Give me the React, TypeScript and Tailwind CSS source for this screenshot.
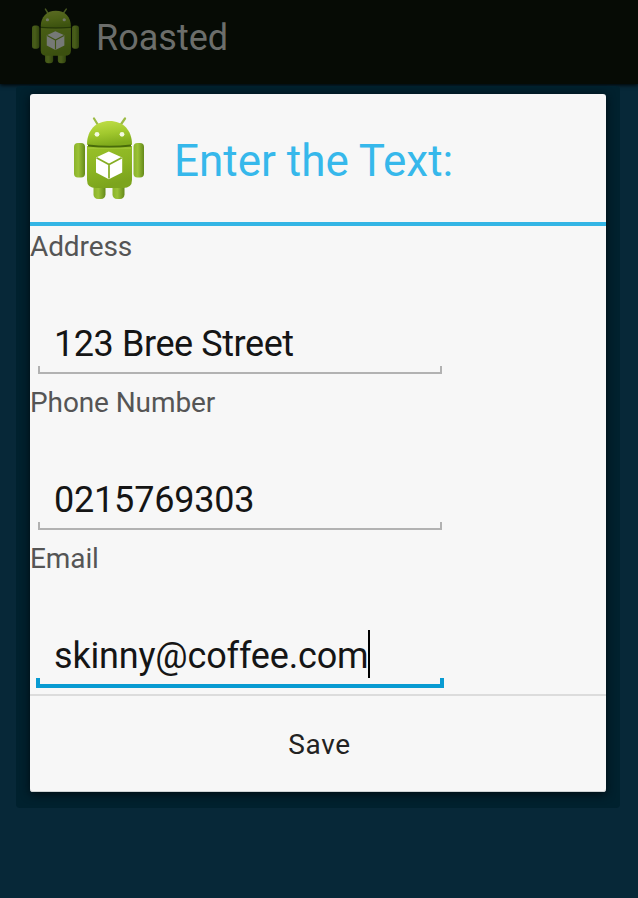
import React from "react";

function Robot({ className, id }: { className: string; id: string }) {
  return (
    <svg className={className} viewBox="0 0 70 83" aria-hidden="true">
      <defs>
        <linearGradient id={`${id}-head`} x1="0" y1="0" x2="0.25" y2="1">
          <stop offset="0" stopColor="#c3e04a" />
          <stop offset="0.55" stopColor="#a2c92e" />
          <stop offset="1" stopColor="#80ab1c" />
        </linearGradient>
        <linearGradient id={`${id}-body`} x1="0" y1="0" x2="0.3" y2="1">
          <stop offset="0" stopColor="#99c129" />
          <stop offset="0.6" stopColor="#8ab322" />
          <stop offset="1" stopColor="#7ca41d" />
        </linearGradient>
        <linearGradient id={`${id}-limb`} x1="0" y1="0" x2="1" y2="0">
          <stop offset="0" stopColor="#8bb32b" />
          <stop offset="0.4" stopColor="#9bc236" />
          <stop offset="1" stopColor="#64891a" />
        </linearGradient>
      </defs>
      <path d="M20 1.5 24 8M51 1.5 46.5 8" stroke="#9cbb45" strokeWidth="2.2" strokeLinecap="round" />
      <rect x="19.500" y="60" width="12" height="22" rx="4.500" fill={`url(#${id}-limb)`} />
      <rect x="38.500" y="60" width="12" height="22" rx="4.500" fill={`url(#${id}-limb)`} />
      <rect x="0" y="26" width="11" height="34.500" rx="4" fill={`url(#${id}-limb)`} />
      <rect x="59.500" y="26" width="10.500" height="34.500" rx="4" fill={`url(#${id}-limb)`} />
      <path d="M13 27.500C13 13 22 4 35.500 4S58 13 58 27.500Q57 29 54 29H17Q14 29 13 27.500Z" fill={`url(#${id}-head)`} />
      <path d="M13 29H58V63Q58 71 49 71H22Q13 71 13 63Z" fill={`url(#${id}-body)`} />
      <path d="M14 28.600Q35 31 57 28.600" stroke="#486b0a" strokeWidth="2" fill="none" />
      <path d="M14 31.200H57" stroke="#b0d248" strokeWidth="0.900" opacity="0.700" />
      <circle cx="23" cy="17.300" r="2.400" fill="#f4fae2" />
      <circle cx="48" cy="17.300" r="2.400" fill="#f4fae2" />
      <path d="M34.800 34.500 48.200 40.400V55.500L34.800 62.200 22 55.500V40.400Z" fill="#fff" />
      <path d="M22.500 40.800 35 47.500 47.700 40.800M35 47.500V61.500" stroke="#85ad23" strokeWidth="1.700" fill="none" />
    </svg>
  );
}

type FieldProps = { label: string; value: string; tracking: string; focused?: boolean };

function Field({ label, value, tracking, focused = false }: FieldProps) {
  return (
    <div className="flex h-[156px] flex-col">
      <label className="h-10 pt-px text-[28px] leading-[40px] tracking-[-0.1px] whitespace-nowrap text-[#555]">{label}</label>
      <div className={focused ? "ml-[6px] flex h-[110px] w-[408px] flex-col justify-end" : "ml-2 flex h-[108px] w-[404px] flex-col justify-end"}>
        <div className={focused ? "mb-px flex h-[42px] items-center pl-[18px]" : "mb-px flex h-[42px] items-center pl-4"}>
          <span className={`text-[36px] leading-[42px] whitespace-nowrap text-[#151515] ${tracking}`}>{value}</span>
          {focused && <span className="-mt-2 -mb-1 h-[48px] w-[2px] shrink-0 bg-black" />}
        </div>
        <div className={focused ? "h-[10px] shrink-0 border-x-4 border-b-4 border-[#099bd2]" : "h-2 shrink-0 border-x-2 border-b-2 border-[#b2b2b2]"} />
      </div>
    </div>
  );
}

export default function App() {
  return (
    <div className="flex h-[898px] w-[638px] flex-col overflow-hidden bg-[#072838] font-['Roboto',sans-serif]">
      <header className="flex h-[84px] shrink-0 items-start bg-[#060b05] pl-8 shadow-[0_1px_4px_#000]">
        <Robot id="bar" className="mt-2 h-[56px] w-[47px] opacity-45" />
        <span className="mt-[17px] ml-[17px] text-[36px] leading-[42px] text-[#6c6e6b]">Roasted</span>
      </header>
      <div className="mt-[2px] ml-4 h-[722px] w-[604px] shrink-0 rounded-[4px] bg-[#00212e] px-[14px] pt-2 pb-4">
        <main className="flex h-[698px] w-[576px] flex-col rounded-[3px] bg-[#f7f7f7] shadow-[0_2px_10px_#000c12,inset_0_-1px_0_#cfd3d4]">
          <div className="flex h-[132px] shrink-0 items-start border-b-4 border-[#33b5e5] pl-11">
            <Robot id="dialog" className="mt-[23px] h-[83px] w-[70px]" />
            <h1 className="mt-[41px] ml-[30px] text-[44px] leading-[52px] font-normal whitespace-nowrap text-[#36b8eb]">Enter the Text:</h1>
          </div>
          <Field label="Address" value="123 Bree Street" tracking="tracking-[-0.42px]" />
          <Field label="Phone Number" value="0215769303" tracking="tracking-[-0.2px]" />
          <Field label="Email" value="skinny@coffee.com" tracking="tracking-[-0.17px]" focused />
          <button className="flex h-[98px] items-center justify-center border-t-2 border-[#dcdcdc] pt-[2px] pl-[3px] text-[28px] leading-[34px] tracking-[0.6px] text-[#222]">Save</button>
        </main>
      </div>
    </div>
  );
}
